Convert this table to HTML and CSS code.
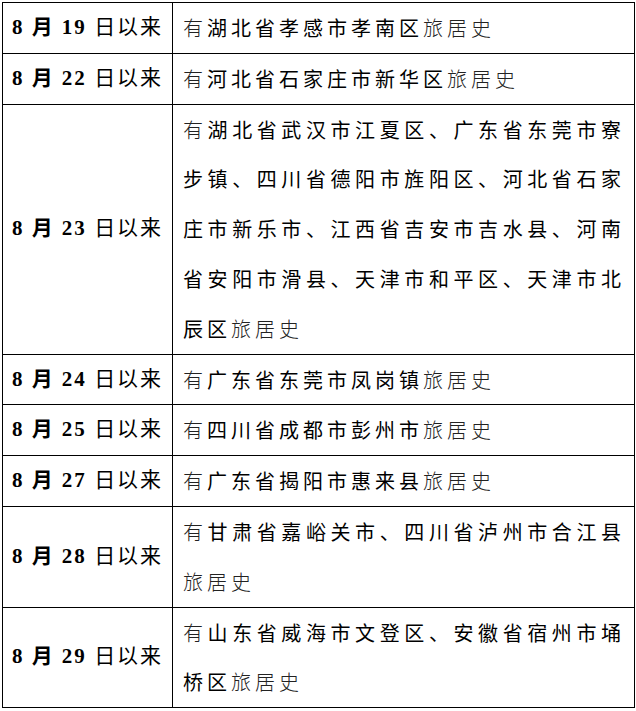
FILE: index.html
```html
<!DOCTYPE html>
<html lang="zh-CN">
<head>
<meta charset="utf-8">
<link rel="stylesheet" href="styles.css">
</head>
<body>
<table class="tbl">
  <colgroup><col class="c1"><col class="c2"></colgroup>
  <tr><td class="date"><b>8 月 19</b> 日以来</td><td class="desc"><span class="lt">有</span><span class="pl">湖北省孝感市孝南区</span><span class="lt">旅居史</span></td></tr>
  <tr><td class="date"><b>8 月 22</b> 日以来</td><td class="desc"><span class="lt">有</span><span class="pl">河北省石家庄市新华区</span><span class="lt">旅居史</span></td></tr>
  <tr><td class="date"><b>8 月 23</b> 日以来</td><td class="desc"><span class="lt">有</span><span class="pl">湖北省武汉市江夏区、广东省东莞市寮步镇、四川省德阳市旌阳区、河北省石家庄市新乐市、江西省吉安市吉水县、河南省安阳市滑县、天津市和平区、天津市北辰区</span><span class="lt">旅居史</span></td></tr>
  <tr><td class="date"><b>8 月 24</b> 日以来</td><td class="desc"><span class="lt">有</span><span class="pl">广东省东莞市凤岗镇</span><span class="lt">旅居史</span></td></tr>
  <tr><td class="date"><b>8 月 25</b> 日以来</td><td class="desc"><span class="lt">有</span><span class="pl">四川省成都市彭州市</span><span class="lt">旅居史</span></td></tr>
  <tr><td class="date"><b>8 月 27</b> 日以来</td><td class="desc"><span class="lt">有</span><span class="pl">广东省揭阳市惠来县</span><span class="lt">旅居史</span></td></tr>
  <tr><td class="date"><b>8 月 28</b> 日以来</td><td class="desc"><span class="lt">有</span><span class="pl">甘肃省嘉峪关市、四川省泸州市合江县</span><span class="lt">旅居史</span></td></tr>
  <tr><td class="date"><b>8 月 29</b> 日以来</td><td class="desc"><span class="lt">有</span><span class="pl">山东省威海市文登区、安徽省宿州市埇桥区</span><span class="lt">旅居史</span></td></tr>
</table>
</body>
</html>
```
FILE: styles.css
```css
html, body {
  margin: 0;
  padding: 0;
  background: #fff;
}
body {
  padding: 2px 0 0 2px;
}
.tbl {
  border-collapse: collapse;
  table-layout: fixed;
  width: 632px;
  color: #000;
}
.c1 { width: 170px; }
.c2 { width: 462px; }
.tbl td {
  border: 1px solid #000;
  vertical-align: middle;
  line-height: 49.8px;
}
.date {
  text-align: center;
  padding: 0;
  font-family: "Liberation Serif", "Noto Sans CJK SC", serif;
  font-size: 21px;
  letter-spacing: 2px;
  white-space: nowrap;
}
.date b {
  font-weight: 700;
}
.desc {
  padding: 0 9px 0 10px;
  font-family: "Noto Sans CJK SC", sans-serif;
  font-size: 20px;
  letter-spacing: 4px;
  text-align: justify;
}
.lt {
  font-weight: 300;
  color: #222;
}
.pl {
  font-weight: 400;
}
```
